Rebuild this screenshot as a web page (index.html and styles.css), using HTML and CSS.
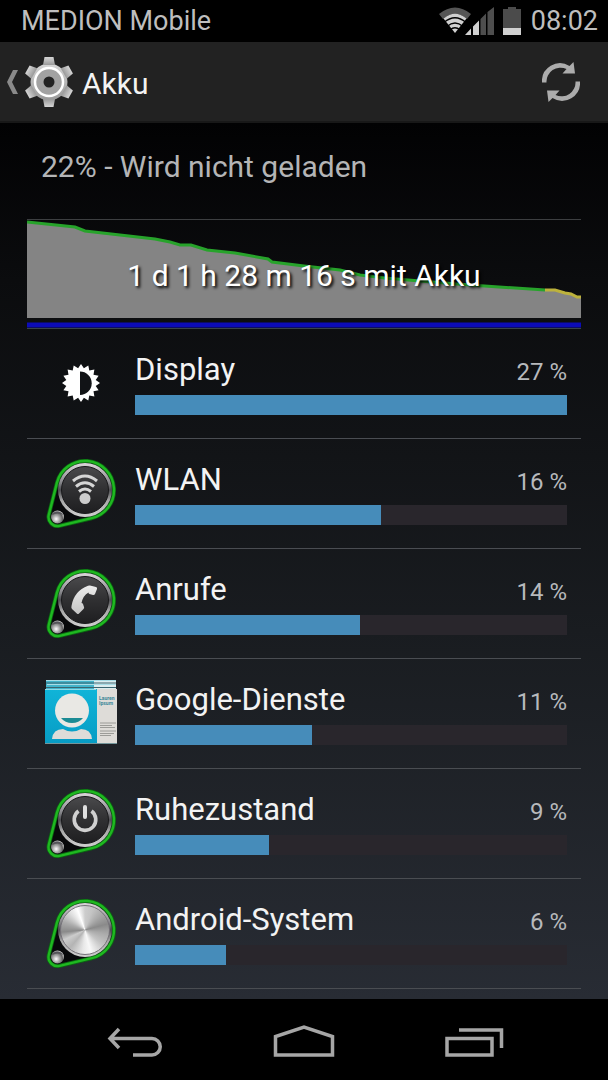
FILE: index.html
```html
<!DOCTYPE html>
<html lang="de">
<head>
<meta charset="utf-8">
<meta name="viewport" content="width=device-width, initial-scale=1">
<title>Akku</title>
<link rel="stylesheet" href="styles.css">
</head>
<body>
<svg class="defs" width="0" height="0" aria-hidden="true">
  <defs>
    <linearGradient id="gear" x1="0" y1="0" x2="0" y2="1"><stop offset="0" stop-color="#d6d6d6"/><stop offset="1" stop-color="#999"/></linearGradient>
    <linearGradient id="rim" x1="0" y1="0" x2="0" y2="1"><stop offset="0" stop-color="#dcd8da"/><stop offset=".35" stop-color="#8a8a8e"/><stop offset=".5" stop-color="#4c4c50"/><stop offset=".7" stop-color="#a8a8a8"/><stop offset="1" stop-color="#d0d0d0"/></linearGradient>
    <linearGradient id="disc" x1="0" y1="0" x2="0" y2="1"><stop offset="0" stop-color="#4a4a4c"/><stop offset=".5" stop-color="#303032"/><stop offset="1" stop-color="#1e1e20"/></linearGradient>
    <radialGradient id="bead" cx=".4" cy=".65" r=".65"><stop offset="0" stop-color="#fff"/><stop offset=".4" stop-color="#aaa"/><stop offset=".75" stop-color="#666"/><stop offset="1" stop-color="#ccc"/></radialGradient>
    <linearGradient id="glyph" x1="0" y1="0" x2="0" y2="1"><stop offset="0" stop-color="#ececec"/><stop offset="1" stop-color="#c4c4c4"/></linearGradient>
    <linearGradient id="cyan" x1="0" y1="0" x2="0" y2="1"><stop offset="0" stop-color="#10b4d8"/><stop offset="1" stop-color="#079cc4"/></linearGradient>
    <symbol id="badge" viewBox="0 0 72 72">
      <path d="M11.9 25.9A29 29 0 1 1 46.6 61.2L14.6 68.8A9 9 0 0 1 3.8 57.8Z" fill="#08090b" stroke="#0b6a11" stroke-width="4"/>
      <path d="M11.9 25.9A29 29 0 1 1 46.6 61.2L14.6 68.8A9 9 0 0 1 3.8 57.8Z" fill="none" stroke="#1fb821" stroke-width="2.400"/>
      <circle cx="40" cy="33" r="27" fill="url(#rim)"/>
      <circle cx="40" cy="33" r="23.500" fill="url(#disc)" stroke="#19191b"/>
      <circle cx="12.500" cy="60" r="6.500" fill="url(#bead)"/>
      <path d="M7 58a6 6 0 0 1 11 0q-5.500-3-11 0z" fill="#55555a"/>
    </symbol>
  </defs>
</svg>

<header class="status">
  <span>MEDION Mobile</span>
  <span class="status-right">
    <svg class="signal" viewBox="0 0 56 28" aria-label="WLAN und Mobilfunk">
      <path d="M0 7Q16-6 32 7L28 12Q16 2 4 12Z" fill="#555"/>
      <path d="M4.500 11.500Q16 2 27.500 11.500L16 26Z" fill="#d0d0d0"/>
      <path d="M5 15.500Q16 6 27 15.500M8 19.500Q16 12.500 24 19.500M11 23Q16 18.500 21 23" fill="none" stroke="#000" stroke-width="1.300"/>
      <path d="M26 28L32 21.500V28ZM34 28V19.500L40 13.500V28Z" fill="#d0d0d0"/>
      <path d="M41.500 28V12L47 6.500V28ZM48.500 28V5L55 0V28Z" fill="#4e4e4e"/>
    </svg>
    <svg class="battery" viewBox="0 0 18 28" aria-label="Akkustand"><path d="M0 2H5V0H13V2H18V28H0Z" fill="#4b4b4b"/><path d="M0 21H18V28H0Z" fill="#d0d0d0"/></svg>
    <time>08:02</time>
  </span>
</header>

<div class="actionbar">
  <button class="up" type="button" aria-label="Zurück zu Einstellungen">
    <svg class="chevron" viewBox="0 0 12 24"><path d="M6 0H11L5 12L11 24H6L0 12Z" fill="#8a8a8a"/></svg>
    <svg class="gear" viewBox="-25 -26 50 52">
      <g fill="url(#gear)">
        <circle r="18.500"/>
        <path d="M-6-17L-4.500-25H4.500L6-17Z"/>
        <path d="M-6-17L-4.500-25H4.500L6-17Z" transform="rotate(60)"/>
        <path d="M-6-17L-4.500-25H4.500L6-17Z" transform="rotate(120)"/>
        <path d="M-6-17L-4.500-25H4.500L6-17Z" transform="rotate(180)"/>
        <path d="M-6-17L-4.500-25H4.500L6-17Z" transform="rotate(240)"/>
        <path d="M-6-17L-4.500-25H4.500L6-17Z" transform="rotate(300)"/>
      </g>
      <circle r="14" fill="#a2a2a2" stroke="#fff" stroke-width="2.500"/>
      <circle r="5.500" fill="#222"/>
    </svg>
  </button>
  <h1>Akku</h1>
  <button class="refresh" type="button" aria-label="Aktualisieren">
    <svg viewBox="0 0 38 42">
      <g fill="#acacac">
        <path d="M0 21.500A18 18 0 0 1 27.500 5L31.500 1L33 12.500L20.500 12.500L24.500 8A14 14 0 0 0 4.500 21.500Z"/>
        <path d="M0 21.500A18 18 0 0 1 27.500 5L31.500 1L33 12.500L20.500 12.500L24.500 8A14 14 0 0 0 4.500 21.500Z" transform="rotate(180 19 21)"/>
      </g>
    </svg>
  </button>
</div>

<main class="content">
  <p class="summary">22% - Wird nicht geladen</p>

  <section class="chart">
    <svg class="plot" viewBox="0 0 554 108" preserveAspectRatio="none" aria-hidden="true">
      <path d="M0 2L48 7L58 11L93 15L128 19L143 22L153 25H164L180 30L208 33L241 39L245 42L277 46L313 50L333 55L358 58L393 61L443 65L518 70L538 72L550 76H554V98H0Z" fill="#848484"/>
      <path d="M0 2L48 7L58 11L93 15L128 19L143 22L153 25H164L180 30L208 33L241 39L245 42L277 46L313 50L333 55L358 58L393 61L443 65L518 70" fill="none" stroke="#27a32b" stroke-width="3"/>
      <path d="M518 70L528 70L538 73L544 74L550 77H554" fill="none" stroke="#bdb23c" stroke-width="3"/>
      <path d="M0 105H554" stroke="#0c0cb8" stroke-width="5"/>
    </svg>
    <p class="duration">1 d 1 h 28 m 16 s mit Akku</p>
  </section>

  <ul class="usage">
    <li>
      <svg class="icon" viewBox="0 0 72 72" aria-hidden="true">
        <path fill="#fff" d="M36 17L38.900 21.300L43.300 18.400L44.300 23.500L49.400 22.600L48.500 27.700L53.600 28.700L50.700 33.100L55 36L50.700 38.900L53.600 43.300L48.500 44.300L49.400 49.400L44.300 48.500L43.300 53.600L38.900 50.700L36 55L33.100 50.700L28.700 53.600L27.700 48.500L22.600 49.400L23.500 44.300L18.400 43.300L21.300 38.900L17 36L21.300 33.100L18.400 28.700L23.500 27.700L22.600 22.600L27.700 23.500L28.700 18.400L33.100 21.300Z"/>
        <path fill="#111316" d="M35 24.500A11.700 11.700 0 0 1 35 47.900Z"/>
      </svg>
      <div class="label"><span class="name">Display</span><span class="pct">27 %</span></div>
      <div class="bar"><div class="fill" style="width:100%"></div></div>
    </li>
    <li>
      <svg class="icon" viewBox="0 0 72 72" aria-hidden="true">
        <use href="#badge"/>
        <g fill="none" stroke="#d6d6d6" stroke-width="3"><path d="M28 24Q40 14 52 24M31 29.500Q40 22 49 29.500M34 34.500Q40 29.500 46 34.500"/></g>
        <circle cx="40" cy="41.500" r="5.500" fill="#ccc"/>
      </svg>
      <div class="label"><span class="name">WLAN</span><span class="pct">16 %</span></div>
      <div class="bar"><div class="fill" style="width:57%"></div></div>
    </li>
    <li>
      <svg class="icon" viewBox="0 0 72 72" aria-hidden="true">
        <use href="#badge"/>
        <path fill="url(#glyph)" d="M45 18.500L51 20Q52.500 20.500 52 22L50 27Q49.500 28.200 48 28L44.500 27Q43.500 26.700 43.500 25.500Q38 28.500 36.500 36Q37.500 36 38 37L39 40Q39.500 41 38.500 42L34 46.500Q33 47.500 31.800 46.500L27 42Q26 41 26.500 39Q29 24 43 18.800Q44 18.300 45 18.500Z"/>
      </svg>
      <div class="label"><span class="name">Anrufe</span><span class="pct">14 %</span></div>
      <div class="bar"><div class="fill" style="width:52%"></div></div>
    </li>
    <li>
      <svg class="icon" viewBox="0 0 72 72" aria-hidden="true">
        <path d="M1 3H50V12H1Z" fill="#42b4cc"/><path d="M49 3H71V12H49Z" fill="#dcecee"/>
        <path d="M1 3.500H71M2 7.500H71" stroke="#a8dce6"/><path d="M1 6H71M1 10.500H71" stroke="#3a6570"/>
        <path d="M0 12H52V67H0Z" fill="url(#cyan)"/><path d="M52 12H72V67H52Z" fill="#dedcd8"/>
        <path d="M0 12.500H51" stroke="#8edaea"/>
        <circle cx="27" cy="33.500" r="17" fill="#e9e8e4"/>
        <path d="M16 41H38Q34 46 27 46Q20 46 16 41Z" fill="#1b8b94"/>
        <path d="M7 62Q8 52 18 52Q27 57 36 52Q46 52 47 62Z" fill="#dedcd8"/>
        <path d="M0 66.500H72" stroke="#74959a"/>
        <text class="card-text" x="54" y="23">Lauren</text><text class="card-text" x="54" y="28">Ipsum</text>
        <path d="M55 46H71M55 48.500H67M55 50.500H70M55 54H71M55 56.500H69M55 58.500H66" stroke="#8b8b88" stroke-width=".8"/>
      </svg>
      <div class="label"><span class="name">Google-Dienste</span><span class="pct">11 %</span></div>
      <div class="bar"><div class="fill" style="width:41%"></div></div>
    </li>
    <li>
      <svg class="icon" viewBox="0 0 72 72" aria-hidden="true">
        <use href="#badge"/>
        <path d="M33.500 24A10.800 10.800 0 1 0 46.500 24" fill="none" stroke="#d0d0d0" stroke-width="3.600"/>
        <path d="M40 20V30" stroke="#e0e0e0" stroke-width="4" stroke-linecap="round"/>
      </svg>
      <div class="label"><span class="name">Ruhezustand</span><span class="pct">9 %</span></div>
      <div class="bar"><div class="fill" style="width:31%"></div></div>
    </li>
    <li>
      <span class="icon metal-icon">
        <svg viewBox="0 0 72 72" aria-hidden="true"><use href="#badge"/></svg>
        <span class="metal"></span>
      </span>
      <div class="label"><span class="name">Android-System</span><span class="pct">6 %</span></div>
      <div class="bar"><div class="fill" style="width:21%"></div></div>
    </li>
  </ul>
</main>

<nav class="navbar">
  <button type="button" aria-label="Zurück"><svg viewBox="0 0 60 36"><path d="M14 5L5 14.500L14 24M5.500 14.500H47A8.200 8.200 0 0 1 47 31H28" fill="none" stroke="#a6a6a6" stroke-width="3.500"/></svg></button>
  <button type="button" aria-label="Startseite"><svg viewBox="0 0 60 36"><path d="M1.500 31V12.500L30 3L58.500 12.500V31Z" fill="none" stroke="#a6a6a6" stroke-width="3.500"/></svg></button>
  <button type="button" aria-label="Letzte Apps"><svg viewBox="0 0 60 36"><path d="M4 14.500H49V31H4ZM16 6H58.500V24" fill="none" stroke="#a6a6a6" stroke-width="3.500"/></svg></button>
</nav>
</body>
</html>
```
FILE: styles.css
```css
* { box-sizing: border-box; }
body {
  margin: 0;
  min-height: 100vh;
  display: flex;
  flex-direction: column;
  background: #000;
  color: #f3f3f3;
  font-family: Roboto, "Liberation Sans", sans-serif;
}
h1, p, ul { margin: 0; padding: 0; font-weight: 400; }
svg { display: block; }
button { border: 0; padding: 0; background: none; color: inherit; }
.defs { position: absolute; }

.status {
  height: 42px;
  padding: 0 10px 0 21px;
  display: flex;
  justify-content: space-between;
  align-items: center;
  color: #bebebe;
  font-size: 27px;
}
.status-right { display: flex; align-items: center; gap: 8px; }
.signal { width: 56px; height: 28px; }
.battery { width: 18px; height: 28px; margin-right: 2px; }

.actionbar {
  height: 81px;
  padding: 0 28px 0 7px;
  display: flex;
  align-items: center;
  background: #222;
  border-bottom: 2px solid #181818;
}
.up { display: flex; align-items: center; gap: 5px; }
.chevron { width: 12px; height: 24px; }
.gear { width: 50px; height: 52px; }
.actionbar h1 { flex: 1; padding: 4px 0 0 8px; font-size: 30px; }
.refresh svg { width: 38px; height: 42px; }

.content {
  flex: 1;
  padding: 0 27px 10px;
  background: linear-gradient(#020203, #0b0c0e 18%, #191c20 58%, #282c34);
}
.summary {
  padding: 24px 14px 0;
  height: 96px;
  font-size: 30px;
  line-height: 40px;
  color: #b4b5b6;
}
.chart {
  display: grid;
  border-top: 1px solid #3d3f41;
  border-bottom: 1px solid #37444c;
}
.chart > * { grid-area: 1 / 1; }
.plot { width: 100%; height: 108px; }
.duration {
  padding-top: 36px;
  text-align: center;
  font-size: 30px;
  line-height: 40px;
  color: #fff;
  text-shadow: 2px 2px 3px #000;
}

.usage { list-style: none; }
.usage li {
  height: 110px;
  padding: 18px 14px 0 18px;
  display: grid;
  grid-template-columns: 72px 1fr;
  grid-template-rows: 48px 20px;
  column-gap: 18px;
  border-bottom: 1px solid #4a4d52;
}
.icon { grid-row: 1 / 3; width: 72px; height: 72px; }
.metal-icon { display: grid; }
.metal-icon > * { grid-area: 1 / 1; }
.metal {
  width: 50px;
  height: 50px;
  margin: 8px 0 0 15px;
  border: 1px solid #77737a;
  border-radius: 50%;
  background: conic-gradient(#ccc, #c4c4c4 20deg, #aaa 45deg, #8a8a8a 75deg, #aaa 100deg, #c4c4c4 130deg, #f8f8f8 165deg, #e8e8e8 185deg, #b4b4b4 220deg, #ccc 245deg, #8a8a8a 265deg, #aaa 290deg, #e0e0e0 320deg, #fff 340deg, #ccc);
}
.label {
  display: flex;
  justify-content: space-between;
  align-items: baseline;
  line-height: 46px;
}
.name { font-size: 31px; }
.pct { font-size: 24px; color: #b7b9bc; }
.bar { background: #29262c; }
.fill { height: 20px; background: #468cba; }
.card-text { font: 700 5px Roboto, sans-serif; fill: #3d8798; }

.navbar {
  height: 81px;
  padding: 4px 104px 0;
  display: flex;
  align-items: center;
  justify-content: space-between;
}
.navbar svg { width: 62px; height: 36px; }
```
